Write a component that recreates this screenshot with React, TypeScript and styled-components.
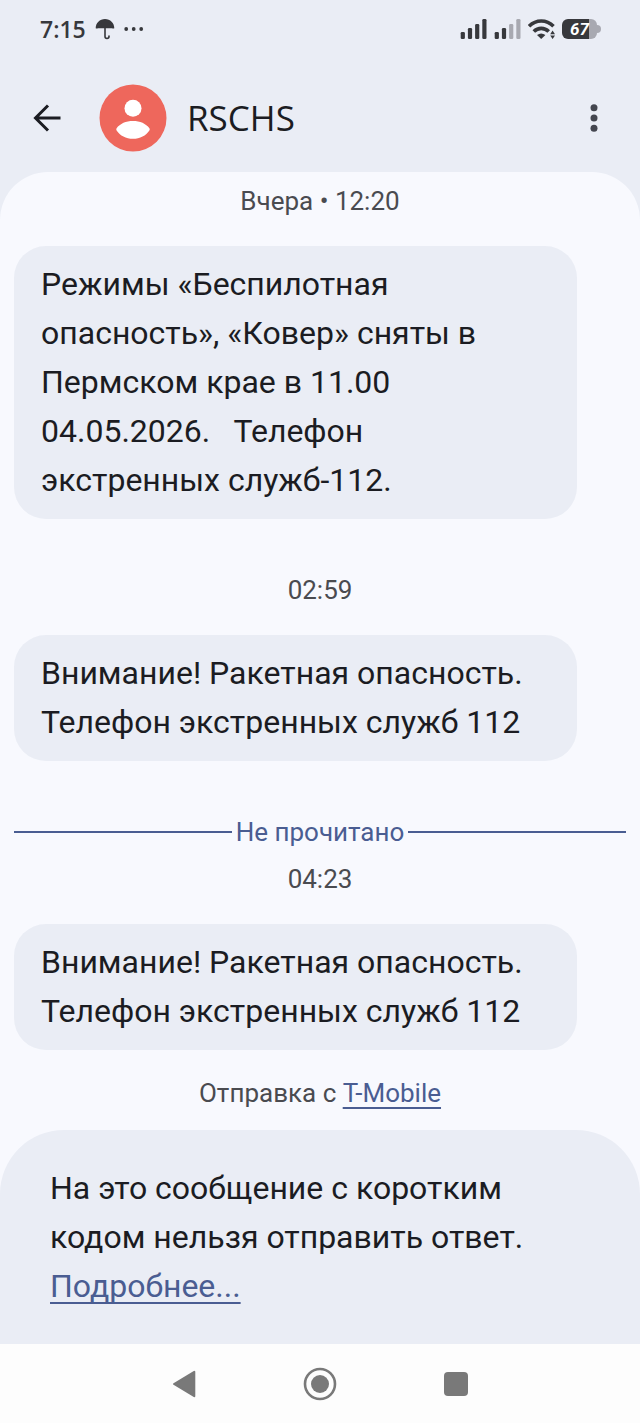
import React from "react";
import styled, { createGlobalStyle } from "styled-components";

const color = {
  bar: "#eaedf5",
  surface: "#f8f9fe",
  text: "#1b1c22",
  muted: "#4a4b50",
  accent: "#4a5d92",
  status: "#37383c",
  statusDim: "#a8a9b1",
  nav: "#797979",
};

const GlobalStyle = createGlobalStyle`
  body {
    margin: 0;
    background: ${color.bar};
    color: ${color.text};
    font-family: Roboto, "Noto Sans", sans-serif;
  }
`;

const Screen = styled.div`
  display: flex;
  flex-direction: column;
  min-height: 100vh;
`;

const StatusBar = styled.div`
  display: flex;
  justify-content: space-between;
  align-items: center;
  height: 58px;
  padding: 0 39px 0 40px;
  color: ${color.status};
`;

const StatusGroup = styled.div<{ $gap: number }>`
  display: flex;
  align-items: center;
  gap: ${(p) => p.$gap}px;
`;

const Clock = styled.time`
  font-family: "Open Sans", sans-serif;
  font-size: 23px;
  font-weight: 600;
  line-height: 28px;
`;

const Battery = styled.div`
  display: flex;
  align-items: center;
`;

const BatteryCell = styled.div<{ $level: number }>`
  display: flex;
  align-items: center;
  justify-content: center;
  box-sizing: border-box;
  width: 35px;
  height: 20px;
  border-radius: 6px;
  color: #fff;
  background: linear-gradient(
    to right,
    ${color.status} ${(p) => p.$level}%,
    ${color.statusDim} ${(p) => p.$level}%
  );
  font-family: Roboto, sans-serif;
  font-size: 17px;
  font-weight: 700;
  font-style: italic;
  line-height: 20px;
`;

const BatteryTip = styled.div`
  width: 4px;
  height: 8px;
  border-radius: 0 4px 4px 0;
  background: ${color.statusDim};
`;

const AppBar = styled.header`
  display: flex;
  align-items: center;
  height: 108px;
  padding: 6px 39px 0 32px;
`;

const IconButton = styled.button`
  display: flex;
  align-items: center;
  justify-content: center;
  padding: 0;
  border: 0;
  background: none;
  color: inherit;
  cursor: pointer;
`;

const Avatar = styled.svg`
  flex: none;
  margin-left: 37px;
`;

const Title = styled.h1`
  flex: 1;
  margin: 0 0 0 20px;
  font-family: "Open Sans", sans-serif;
  font-size: 35px;
  font-weight: 400;
  line-height: 48px;
`;

const Thread = styled.main`
  flex: 1;
  padding: 14px 14px 22px;
  border-radius: 48px 48px 0 0;
  background: ${color.surface};
`;

const Stamp = styled.p`
  margin: 0 0 30px;
  color: ${color.muted};
  font-size: 26px;
  line-height: 30px;
  text-align: center;
`;

const Bubble = styled.p`
  box-sizing: border-box;
  width: 92%;
  margin: 0;
  padding: 14px 27px;
  border-radius: 32px;
  background: ${color.bar};
  font-size: 32px;
  line-height: 49px;
  white-space: pre-wrap;
`;

const Group = styled.section`
  margin-bottom: 56px;

  &:last-of-type {
    margin-bottom: 28px;
  }
`;

const Unread = styled.div`
  display: flex;
  align-items: center;
  gap: 4px;
  margin-bottom: 17px;
  color: ${color.accent};
  font-size: 26px;
  line-height: 30px;

  &::before,
  &::after {
    content: "";
    flex: 1;
    height: 2px;
    background: ${color.accent};
  }
`;

const Sender = styled.p`
  margin: 0;
  color: ${color.muted};
  font-size: 26px;
  line-height: 30px;
  text-align: center;
`;

const Link = styled.a`
  color: ${color.accent};
  text-decoration: underline 2px;
  text-decoration-skip-ink: none;
  text-underline-offset: 5px;
`;

const NoticeBack = styled.div`
  background: ${color.surface};
`;

const Notice = styled.footer`
  padding: 34px 50px 33px;
  border-radius: 64px 64px 0 0;
  background: ${color.bar};
  font-size: 32px;
  line-height: 49px;
`;

const NoticeText = styled.p`
  max-width: 500px;
  margin: 0;
`;

const NavBar = styled.nav`
  display: flex;
  justify-content: center;
  background: #fdfdfd;
`;

const NavButton = styled(IconButton)`
  width: 136px;
  height: 79px;
  color: ${color.nav};
`;

function Signal({ active }: { active: number }) {
  const tops = [13, 9, 5, 0];
  return (
    <svg width="27" height="20" viewBox="0 0 27 20">
      {tops.map((y, i) => (
        <rect
          key={y}
          x={0.7 + i * 7.2}
          y={y}
          width="4.2"
          height={20 - y}
          rx="1.3"
          fill={i < active ? color.status : color.statusDim}
        />
      ))}
    </svg>
  );
}

export default function App() {
  return (
    <Screen>
      <GlobalStyle />
      <StatusBar>
        <StatusGroup $gap={9}>
          <Clock>7:15</Clock>
          <svg width="20" height="22" viewBox="0 0 20 22" fill="none">
            <path d="M.7 10.3C.7 5 4.800 1 10 1s9.300 4 9.300 9.300q-1.200.5-2.300 0H3q-1.200.5-2.300 0z" fill="currentColor" />
            <path d="M10 9v9.500c0 2.600 4 2.600 4 0V18" stroke="currentColor" strokeWidth="1.600" strokeLinecap="round" />
          </svg>
          <svg width="20" height="4" viewBox="0 0 20 4" fill="currentColor">
            <circle cx="2.200" cy="2" r="1.900" />
            <circle cx="9.700" cy="2" r="1.900" />
            <circle cx="17.200" cy="2" r="1.900" />
          </svg>
        </StatusGroup>
        <StatusGroup $gap={7}>
          <Signal active={4} />
          <Signal active={2} />
          <svg width="27" height="20" viewBox="0 0 27 20" fill="none">
            <g stroke="currentColor" strokeWidth="3.600">
              <path d="M1 7.200C8 .2 18.500.2 25.500 7.200" />
              <path d="M5.800 12.600c4.300-4.300 10.600-4.300 14.900 0" />
            </g>
            <path d="M9 16q4.200-3 8.400 0L13.200 20z" fill="currentColor" />
            <path d="M24.600 11.500l2.400 3.800h-4.800zM24.600 20l2.400-3.600h-4.800z" fill="currentColor" />
          </svg>
          <Battery>
            <BatteryCell $level={76}>67</BatteryCell>
            <BatteryTip />
          </Battery>
        </StatusGroup>
      </StatusBar>

      <AppBar>
        <IconButton aria-label="Назад">
          <svg width="30" height="30" viewBox="0 0 30 30" fill="none" stroke="currentColor" strokeWidth="3">
            <path d="M28.500 15H3.500M16 2.500L3.500 15L16 27.500" />
          </svg>
        </IconButton>
        <Avatar width="68" height="68" viewBox="0 0 68 68">
          <circle cx="34" cy="34" r="33.500" fill="#ee675c" />
          <circle cx="34" cy="24.300" r="8.500" fill="#fff" />
          <path d="M17.600 44.300C21 39.500 27 37 34 37s13 2.500 16.400 7.300c.5.700.5 1.400 0 2.100C47 51.500 41 54.800 34 54.800s-13-3.300-16.400-8.400c-.5-.7-.5-1.400 0-2.100z" fill="#fff" />
        </Avatar>
        <Title>RSCHS</Title>
        <IconButton aria-label="Ещё">
          <svg width="14" height="30" viewBox="0 0 14 30" fill="#44464f">
            <circle cx="7" cy="4.800" r="3.500" />
            <circle cx="7" cy="15" r="3.500" />
            <circle cx="7" cy="25.200" r="3.500" />
          </svg>
        </IconButton>
      </AppBar>

      <Thread>
        <Group>
          <Stamp>Вчера • 12:20</Stamp>
          <Bubble>
            {"Режимы «Беспилотная опасность», «Ковер» сняты в Пермском крае в 11.00 04.05.2026.   Телефон экстренных служб-112."}
          </Bubble>
        </Group>
        <Group>
          <Stamp>02:59</Stamp>
          <Bubble>Внимание! Ракетная опасность. Телефон экстренных служб 112</Bubble>
        </Group>
        <Unread>Не прочитано</Unread>
        <Group>
          <Stamp>04:23</Stamp>
          <Bubble>Внимание! Ракетная опасность. Телефон экстренных служб 112</Bubble>
        </Group>
        <Sender>
          Отправка с <Link href="#sim">T-Mobile</Link>
        </Sender>
      </Thread>

      <NoticeBack>
        <Notice>
          <NoticeText>
            На это сообщение с коротким кодом нельзя отправить ответ. <Link href="#more">Подробнее...</Link>
          </NoticeText>
        </Notice>
      </NoticeBack>

      <NavBar>
        <NavButton aria-label="Назад">
          <svg width="24" height="28" viewBox="0 0 24 28">
            <path d="M2 14L22.300 1.800V26.200z" fill="currentColor" stroke="currentColor" strokeWidth="2" strokeLinejoin="round" />
          </svg>
        </NavButton>
        <NavButton aria-label="Домой">
          <svg width="34" height="34" viewBox="0 0 34 34">
            <circle cx="17" cy="17" r="15" fill="none" stroke="currentColor" strokeWidth="2.600" />
            <circle cx="17" cy="17" r="9" fill="currentColor" />
          </svg>
        </NavButton>
        <NavButton aria-label="Недавние">
          <svg width="24" height="24" viewBox="0 0 24 24">
            <rect width="24" height="24" rx="4" fill="currentColor" />
          </svg>
        </NavButton>
      </NavBar>
    </Screen>
  );
}
